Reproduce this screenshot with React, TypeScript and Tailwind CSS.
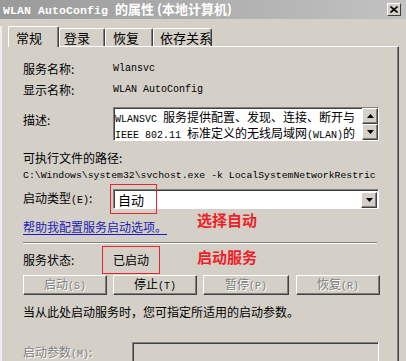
import React from "react";

const cn = "font-['Noto_Sans_CJK_SC',sans-serif]";
const mono = "font-['Liberation_Mono',monospace] text-[10px]";
const disabled = "text-[#808080] [text-shadow:1px_1px_0_#ffffff]";

function L({ children }: { children: React.ReactNode }) {
  return <span className={mono}>{children}</span>;
}

function Btn({ label, k, on, w, ml }: { label: string; k: string; on?: boolean; w: string; ml: string }) {
  return (
    <div
      className={`${w} ${ml} h-[20px] flex items-center justify-center border border-t-white border-l-white border-b-[#404040] border-r-[#404040] shadow-[inset_-1px_-1px_0_#808080] ${on ? "text-black" : disabled}`}
    >
      <span>
        {label}
        <L>({k})</L>
      </span>
    </div>
  );
}

function Arrow({ up }: { up?: boolean }) {
  return (
    <svg width="7" height="4" viewBox="0 0 7 4">
      {up ? <path d="M3.5 0 L7 4 L0 4 Z" fill="#000" /> : <path d="M0 0 L7 0 L3.5 4 Z" fill="#000" />}
    </svg>
  );
}

function SmallBtn({ up, h }: { up?: boolean; h: string }) {
  return (
    <div className={`w-[16px] ${h} bg-[#d4d0c8] flex items-center justify-center border border-t-white border-l-white border-b-[#404040] border-r-[#404040] shadow-[inset_-1px_-1px_0_#808080]`}>
      <Arrow up={up} />
    </div>
  );
}

export default function App() {
  const tabs = [
    { t: "登录", w: "w-[46px]", pl: "pl-[4px]" },
    { t: "恢复", w: "w-[48px]", pl: "pl-[7px]" },
    { t: "依存关系", w: "w-[59px]", pl: "pl-[6px]" },
  ];
  return (
    <div className={`w-[406px] h-[361px] overflow-hidden bg-[#d4d0c8] text-black text-[12px] leading-none ${cn}`}>
      {/* title bar */}
      <div className="h-[19px] flex items-center pl-[3px] bg-gradient-to-r from-[#9a9a9a] to-[#c2c2c2]">
        <span className="text-white font-bold whitespace-nowrap">
          <span className="font-['Liberation_Mono',monospace] text-[11.5px] tracking-[0.1px]">WLAN AutoConfig </span>
          <span className="text-[13px]">的属性 (本地计算机)</span>
        </span>
        <div className="ml-auto mr-[5px] w-[14px] h-[13px] bg-[#d4d0c8] flex items-center justify-center border border-t-white border-l-white border-b-[#404040] border-r-[#404040]">
          <svg width="8" height="7" viewBox="0 0 8 7">
            <path d="M0.5 0.5 L7.5 6.5 M7.5 0.5 L0.5 6.5" stroke="#000" strokeWidth="1.6" />
          </svg>
        </div>
      </div>

      <div className="h-[342px] border-l-2 border-l-[#eceef2]">
        {/* tabs */}
        <div className="mt-[7px] ml-[6px] h-[20px] flex items-end">
          <div className="relative z-10 -mb-px w-[51px] h-[21px] bg-[#d4d0c8] rounded-t-[2px] border-t border-l border-t-white border-l-white border-r border-r-[#404040] shadow-[inset_-1px_0_0_#808080] pl-[7px] text-[13px] whitespace-nowrap flex items-center">
            常规
          </div>
          {tabs.map((t) => (
            <div
              key={t.t}
              className={`${t.w} h-[18px] rounded-t-[2px] border-t border-l border-t-white border-l-white border-r border-r-[#404040] shadow-[inset_-1px_0_0_#808080] ${t.pl} text-[13px] whitespace-nowrap flex items-center`}
            >
              {t.t}
            </div>
          ))}
        </div>

        {/* panel */}
        <div className="ml-[6px] w-[391px] h-[316px] border-t border-t-white border-r border-r-[#404040] shadow-[inset_-1px_0_0_#808080] pl-[15px]">
          <div className="mt-[13px] h-[18px] flex items-center">
            <div className="w-[90px]">服务名称:</div>
            <L>Wlansvc</L>
          </div>
          <div className="mt-[3px] h-[18px] flex items-center">
            <div className="w-[90px]">显示名称:</div>
            <L>WLAN AutoConfig</L>
          </div>

          <div className="mt-[8px] flex items-start">
            <div className="w-[90px] mt-[4px] h-[18px] flex items-center">描述:</div>
            <div className="w-[266px] h-[34px] bg-white border border-t-[#808080] border-l-[#808080] border-b-white border-r-white shadow-[inset_1px_1px_0_#404040] flex">
              <div className="flex-1 pl-[1px] pt-[2px] whitespace-nowrap overflow-hidden">
                <div className="leading-[13px]">
                  <L>WLANSVC </L>服务提供配置、发现、连接、断开与
                </div>
                <div className="leading-[13px]">
                  <L>IEEE 802.11 </L>标准定义的无线局域网<L>(WLAN)</L>的
                </div>
              </div>
              <div className="flex flex-col">
                <SmallBtn up h="h-[16px]" />
                <SmallBtn h="h-[16px]" />
              </div>
            </div>
          </div>

          <div className="mt-[9px] h-[16px] flex items-center">可执行文件的路径:</div>
          <div className="h-[14px] w-[356px] overflow-hidden whitespace-nowrap leading-[14px]">
            <span className="font-['Liberation_Mono',monospace] text-[9.8px]">
              C:\Windows\system32\svchost.exe -k LocalSystemNetworkRestric
            </span>
          </div>

          <div className="mt-[9px] h-[20px] flex items-center">
            <div className="w-[90px]">
              启动类型<L>(E)</L>:
            </div>
            <div className="relative w-[266px] h-[20px] bg-white border border-t-[#808080] border-l-[#808080] border-b-white border-r-white shadow-[inset_1px_1px_0_#404040] flex items-center">
              <div className="flex-1 pl-[4px] text-[13px]">自动</div>
              <SmallBtn h="h-[16px] mr-[1px] mt-[1px]" />
              <div className="absolute left-[-4px] top-[-6px] w-[47px] h-[30px] border border-[#e8262b]" />
              <div className="absolute left-[83px] top-[22px] text-[15px] font-bold text-[#f01e28] whitespace-nowrap">
                选择自动
              </div>
            </div>
          </div>

          <div className="mt-[10px] h-[16px] flex items-center">
            <span className="text-[#1c1cb4] underline underline-offset-2">帮助我配置服务启动选项。</span>
          </div>

          <div className="mt-[7px] w-[354px] h-[2px] border-t border-t-[#808080] border-b border-b-white" />

          <div className="mt-[7px] h-[18px] flex items-center">
            <div className="w-[90px]">服务状态:</div>
            <div className="relative">
              已启动
              <div className="absolute left-[-11px] top-[-8px] w-[58px] h-[28px] border border-[#e8262b]" />
              <div className="absolute left-[84px] top-[-5px] text-[15px] font-bold text-[#f01e28] whitespace-nowrap">
                启动服务
              </div>
            </div>
          </div>

          <div className="mt-[6px] flex">
            <Btn label="启动" k="S" w="w-[84px]" ml="" />
            <Btn label="停止" k="T" on w="w-[84px]" ml="ml-[6px]" />
            <Btn label="暂停" k="P" w="w-[86px]" ml="ml-[6px]" />
            <Btn label="恢复" k="R" w="w-[84px]" ml="ml-[7px]" />
          </div>

          <div className="mt-[9px] h-[16px] flex items-center">当从此处启动服务时，您可指定所适用的启动参数。</div>

          <div className="mt-[22px] flex items-start">
            <div className={`w-[109px] mt-[2px] h-[18px] flex items-center ${disabled}`}>
              <span>
                启动参数<L>(M)</L>:
              </span>
            </div>
            <div className="w-[247px] h-[24px] border border-t-[#808080] border-l-[#808080] border-b-white border-r-white shadow-[inset_1px_1px_0_#404040]" />
          </div>
        </div>
      </div>
    </div>
  );
}
